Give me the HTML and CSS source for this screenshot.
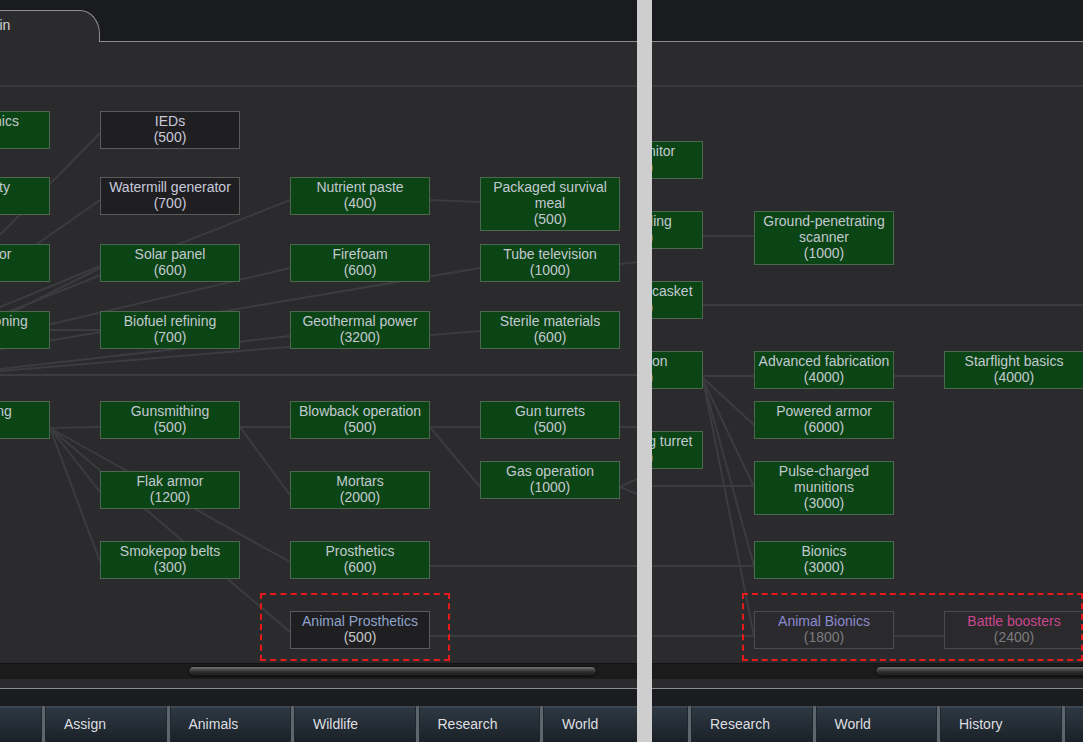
FILE: index.html
```html
<!DOCTYPE html>
<html>
<head>
<meta charset="utf-8">
<title>Research</title>
<link rel="stylesheet" href="styles.css">
</head>
<body>
<div class="screen">
  <section class="panel panel-left">
    <div class="topbar">
      <div class="tab">Main</div>
      <div class="topbar-fill"></div>
    </div>
    <div class="header"></div>
    <div class="separator"></div>
    <div class="graph">
      <svg class="edges" width="637" height="576" viewBox="0 87 637 576">
        <path d="M0,235 L100,133"/>
        <path d="M0,270 L100,200"/>
        <path d="M0,307 L100,266"/>
        <path d="M0,318 L100,268"/>
        <path d="M0,315 L290,200"/>
        <path d="M49,330 L100,330"/>
        <path d="M0,336 L290,268"/>
        <path d="M0,349 L480,268"/>
        <path d="M0,369 L290,336"/>
        <path d="M0,371 L480,331"/>
        <path d="M0,375 L637,375"/>
        <path d="M430,200 L480,202"/>
        <path d="M620,264 L637,262"/>
        <path d="M50,428 L100,427"/>
        <path d="M50,428 L100,492"/>
        <path d="M50,428 L100,562"/>
        <path d="M50,428 L290,562"/>
        <path d="M50,428 L290,632"/>
        <path d="M240,427 L290,427"/>
        <path d="M240,427 L290,495"/>
        <path d="M430,427 L480,427"/>
        <path d="M430,427 L480,487"/>
        <path d="M620,427 L637,427"/>
        <path d="M620,487 L637,479"/>
        <path d="M620,487 L637,494"/>
        <path d="M430,566 L637,566"/>
        <path d="M430,636 L637,636"/>
      </svg>

      <div class="node" style="left:-90px;top:24px"><div>Hydroponics</div><div>(500)</div></div>
      <div class="node" style="left:-90px;top:90px"><div>Electricity</div><div>(1600)</div></div>
      <div class="node" style="left:-90px;top:157px"><div>Generator</div><div>(600)</div></div>
      <div class="node" style="left:-90px;top:224px"><div>Air conditioning</div><div>(600)</div></div>
      <div class="node" style="left:-90px;top:314px"><div>Machining</div><div>(1000)</div></div>

      <div class="node node-dark" style="left:100px;top:24px"><div>IEDs</div><div>(500)</div></div>
      <div class="node node-dark" style="left:100px;top:90px"><div>Watermill generator</div><div>(700)</div></div>
      <div class="node" style="left:100px;top:157px"><div>Solar panel</div><div>(600)</div></div>
      <div class="node" style="left:100px;top:224px"><div>Biofuel refining</div><div>(700)</div></div>
      <div class="node" style="left:100px;top:314px"><div>Gunsmithing</div><div>(500)</div></div>
      <div class="node" style="left:100px;top:384px"><div>Flak armor</div><div>(1200)</div></div>
      <div class="node" style="left:100px;top:454px"><div>Smokepop belts</div><div>(300)</div></div>

      <div class="node" style="left:290px;top:90px"><div>Nutrient paste</div><div>(400)</div></div>
      <div class="node" style="left:290px;top:157px"><div>Firefoam</div><div>(600)</div></div>
      <div class="node" style="left:290px;top:224px"><div>Geothermal power</div><div>(3200)</div></div>
      <div class="node" style="left:290px;top:314px"><div>Blowback operation</div><div>(500)</div></div>
      <div class="node" style="left:290px;top:384px"><div>Mortars</div><div>(2000)</div></div>
      <div class="node" style="left:290px;top:454px"><div>Prosthetics</div><div>(600)</div></div>
      <div class="node node-dark" style="left:290px;top:524px"><div class="name-blue">Animal Prosthetics</div><div class="cost-light">(500)</div></div>

      <div class="node" style="left:480px;top:90px"><div>Packaged survival meal</div><div>(500)</div></div>
      <div class="node" style="left:480px;top:157px"><div>Tube television</div><div>(1000)</div></div>
      <div class="node" style="left:480px;top:224px"><div>Sterile materials</div><div>(600)</div></div>
      <div class="node" style="left:480px;top:314px"><div>Gun turrets</div><div>(500)</div></div>
      <div class="node" style="left:480px;top:374px"><div>Gas operation</div><div>(1000)</div></div>

      <div class="highlight" style="left:260px;top:506px;width:190px;height:68px"></div>
    </div>
    <div class="hscroll"><div class="thumb thumb-left"></div></div>
    <div class="spacer"></div>
    <div class="rule"></div>
    <div class="strip"></div>
    <nav class="buttons buttons-left">
      <div class="btn"></div>
      <div class="btn">Assign</div>
      <div class="btn">Animals</div>
      <div class="btn">Wildlife</div>
      <div class="btn">Research</div>
      <div class="btn btn-last">World</div>
    </nav>
  </section>

  <div class="divider"></div>

  <section class="panel panel-right">
    <div class="topbar">
      <div class="topbar-fill"></div>
    </div>
    <div class="header"></div>
    <div class="separator"></div>
    <div class="graph">
      <svg class="edges" width="431" height="576" viewBox="652 87 431 576">
        <path d="M703,236 L754,236"/>
        <path d="M703,305 L1083,305"/>
        <path d="M652,375 L703,375"/>
        <path d="M703,376 L754,376"/>
        <path d="M703,378 L754,425"/>
        <path d="M703,380 L754,487"/>
        <path d="M703,380 L754,566"/>
        <path d="M703,380 L754,636"/>
        <path d="M637,486 L754,486"/>
        <path d="M637,566 L754,566"/>
        <path d="M637,636 L754,636"/>
        <path d="M894,376 L944,376"/>
        <path d="M894,636 L944,636"/>
      </svg>

      <div class="node" style="left:-89px;top:54px"><div>Vitals monitor</div><div>(1000)</div></div>
      <div class="node" style="left:-89px;top:124px"><div>Deep drilling</div><div>(1200)</div></div>
      <div class="node" style="left:-89px;top:194px"><div>Cryptosleep casket</div><div>(1400)</div></div>
      <div class="node" style="left:-89px;top:264px"><div>Fabrication</div><div>(4000)</div></div>
      <div class="node" style="left:-89px;top:344px"><div>Uranium slug turret</div><div>(2400)</div></div>

      <div class="node" style="left:102px;top:124px"><div>Ground-penetrating scanner</div><div>(1000)</div></div>
      <div class="node" style="left:102px;top:264px"><div>Advanced fabrication</div><div>(4000)</div></div>
      <div class="node" style="left:102px;top:314px"><div>Powered armor</div><div>(6000)</div></div>
      <div class="node" style="left:102px;top:374px"><div>Pulse-charged munitions</div><div>(3000)</div></div>
      <div class="node" style="left:102px;top:454px"><div>Bionics</div><div>(3000)</div></div>
      <div class="node node-locked" style="left:102px;top:524px"><div class="name-violet">Animal Bionics</div><div class="cost-dim">(1800)</div></div>

      <div class="node" style="left:292px;top:264px"><div>Starflight basics</div><div>(4000)</div></div>
      <div class="node node-locked" style="left:292px;top:524px"><div class="name-pink">Battle boosters</div><div class="cost-dim">(2400)</div></div>

      <div class="highlight" style="left:90px;top:506px;width:341px;height:68px"></div>
    </div>
    <div class="hscroll"><div class="thumb thumb-right"></div></div>
    <div class="spacer"></div>
    <div class="rule"></div>
    <div class="strip"></div>
    <nav class="buttons buttons-right">
      <div class="btn"></div>
      <div class="btn">Research</div>
      <div class="btn">World</div>
      <div class="btn">History</div>
      <div class="btn"></div>
    </nav>
  </section>
</div>
</body>
</html>
```

FILE: styles.css
```css
* {
  box-sizing: border-box;
}

html,
body {
  margin: 0;
  padding: 0;
}

body {
  width: 1083px;
  height: 742px;
  overflow: hidden;
  background: #2b2b2e;
  font-family: "Liberation Sans", Arial, sans-serif;
}

.screen {
  display: flex;
  width: 1083px;
  height: 742px;
}

.panel {
  display: flex;
  flex-direction: column;
  flex: none;
  height: 742px;
  overflow: hidden;
  background: #2b2b2e;
}

.panel-left {
  width: 637px;
}

.panel-right {
  width: 431px;
}

.divider {
  flex: none;
  width: 15px;
  background: #cecece;
}

/* top tab bar */
.topbar {
  flex: none;
  display: flex;
  align-items: flex-end;
  height: 42px;
  background: #1a1b1f;
}

.tab {
  flex: none;
  width: 160px;
  height: 32px;
  margin-left: -60px;
  padding: 6px 0 0 40px;
  background: #2b2b2e;
  border-top: 1px solid #8e8e8e;
  border-right: 1px solid #8e8e8e;
  border-top-right-radius: 20px 24px;
  color: #d4d4d4;
  font-size: 14px;
  line-height: 16px;
}

.topbar-fill {
  flex: 1;
  border-bottom: 1px solid #8e8e8e;
}

.header {
  flex: none;
  height: 43px;
}

.separator {
  flex: none;
  height: 2px;
  background: #38393c;
}

/* research graph */
.graph {
  position: relative;
  flex: none;
  height: 576px;
  overflow: hidden;
}

.edges {
  position: absolute;
  left: 0;
  top: 0;
}

.edges path {
  fill: none;
  stroke: #3b3c3f;
  stroke-width: 2;
}

.node {
  position: absolute;
  width: 140px;
  padding: 1px 3px 3px;
  border: 1px solid #4d6650;
  background: #0b4415;
  color: #c2c9cf;
  font-size: 14px;
  line-height: 16px;
  text-align: center;
  white-space: normal;
}

.node-dark {
  background: #1f1f21;
  border-color: #5a5a5a;
  color: #c8c9dc;
}

.node-locked {
  background: #2a2a2c;
  border-color: #4b4b4d;
}

.name-blue {
  color: #8ea3cb;
}

.cost-light {
  color: #c4c4c8;
}

.name-violet {
  color: #8b8bd2;
}

.name-pink {
  color: #c9478c;
}

.cost-dim {
  color: #7c7c7e;
}

.highlight {
  position: absolute;
  border: 2px dashed #e8191b;
}

/* horizontal scrollbar */
.hscroll {
  flex: none;
  height: 16px;
  padding-top: 3px;
  background: #1b1b1c;
  border-top: 1px solid #141414;
  overflow: hidden;
}

.thumb {
  height: 11px;
  margin-top: -1px;
  border: 1px solid #0c0c0c;
  border-radius: 6px;
  background: linear-gradient(to bottom, #7a7a7a 0, #515151 2px, #2c2c2c 5px, #161616 100%);
}

.thumb-left {
  width: 409px;
  margin-left: 188px;
}

.thumb-right {
  width: 320px;
  margin-left: 223px;
}

.spacer {
  flex: none;
  height: 9px;
}

.rule {
  flex: none;
  height: 1px;
  background: #8a8a8a;
}

.strip {
  flex: none;
  height: 17px;
  background: #1a1c20;
}

/* bottom main buttons */
.buttons {
  flex: none;
  display: flex;
  gap: 3px;
  height: 36px;
  background: #5d656d;
  overflow: hidden;
}

.btn {
  flex: none;
  width: 121.5px;
  height: 36px;
  padding-left: 18px;
  border-top: 2px solid #3b4651;
  border-left: 1px solid #20262c;
  border-right: 1px solid #20262c;
  background: linear-gradient(to bottom, #2d3842 0%, #252e37 45%, #1a2027 100%);
  color: #dedfe0;
  font-size: 14px;
  line-height: 33px;
  white-space: nowrap;
  overflow: hidden;
}

.btn-last {
  width: 97px;
}

.buttons-left .btn:first-child {
  margin-left: -79.5px;
}

.buttons-right .btn:first-child {
  margin-left: -85.5px;
}
```
